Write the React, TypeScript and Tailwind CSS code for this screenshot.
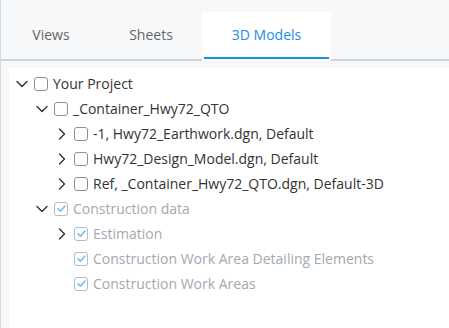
import { ChevronDown, ChevronRight } from "lucide-react";

type Node = {
  label: string;
  level: number;
  expand?: "open" | "closed";
  checked?: boolean;
  disabled?: boolean;
};

const rows: Node[] = [
  { label: "Your Project", level: 0, expand: "open" },
  { label: "_Container_Hwy72_QTO", level: 1, expand: "open" },
  { label: "-1, Hwy72_Earthwork.dgn, Default", level: 2, expand: "closed" },
  { label: "Hwy72_Design_Model.dgn, Default", level: 2, expand: "closed" },
  { label: "Ref, _Container_Hwy72_QTO.dgn, Default-3D", level: 2, expand: "closed" },
  { label: "Construction data", level: 1, expand: "open", checked: true, disabled: true },
  { label: "Estimation", level: 2, expand: "closed", checked: true, disabled: true },
  { label: "Construction Work Area Detailing Elements", level: 2, checked: true, disabled: true },
  { label: "Construction Work Areas", level: 2, checked: true, disabled: true }
];

function Checkbox({ checked, disabled }: { checked?: boolean; disabled?: boolean }) {
  return (
    <span
      className={`flex size-[14px] shrink-0 items-center justify-center rounded-[3px] border bg-white ${
        disabled ? "border-[#b4bac1]" : "border-[#8c8f94]"
      }`}
    >
      {checked ? (
        <svg viewBox="0 0 12 12" className="size-[11px]" fill="none">
          <path d="M2.2 6.4 L4.8 9 L9.8 3.2" stroke="#6bbaf2" strokeWidth="1.6" strokeLinecap="round" strokeLinejoin="round" />
        </svg>
      ) : null}
    </span>
  );
}

function TreeRow({ node }: { node: Node }) {
  return (
    <div className="flex h-[25px] items-center" style={{ paddingLeft: 3 + node.level * 20 }}>
      <span className="flex w-[20px] shrink-0 items-center justify-center text-[#2b2b2b]">
        {node.expand === "open" ? <ChevronDown size={20} strokeWidth={1.5} /> : null}
        {node.expand === "closed" ? <ChevronRight size={20} strokeWidth={1.5} /> : null}
      </span>
      <span className="ml-[2px]">
        <Checkbox checked={node.checked} disabled={node.disabled} />
      </span>
      <span className={`ml-[5px] whitespace-nowrap text-[14px] ${node.disabled ? "text-[#a2a9b1]" : "text-[#333]"}`}>
        {node.label}
      </span>
    </div>
  );
}

export default function App() {
  return (
    <div
      className="flex h-[328px] w-[449px] flex-col overflow-hidden border-l border-[#d6d9de] bg-[#f7f8fa]"
      style={{ fontFamily: '"Open Sans", "Noto Sans", sans-serif' }}
    >
      <div className="flex h-[61px] items-end border-b-2 border-[#cfd3d8] pl-[1px]">
        <div className="flex h-[47px] w-[98px] items-center justify-center pb-[2px] text-[14px] text-[#666]">Views</div>
        <div className="flex h-[47px] w-[102px] items-center justify-center pb-[2px] text-[14px] text-[#666]">Sheets</div>
        <div className="mb-[-2px] flex h-[49px] w-[129px] flex-col bg-white px-[2px]">
          <div className="flex flex-1 items-center justify-center text-[14px] text-[#1b8ee6]">3D Models</div>
          <div className="h-[2px] bg-[#1592e6]" />
          <div className="h-[2px]" />
        </div>
      </div>
      <div className="ml-[8px] mt-[7px] flex-1 bg-white pt-[3px]">
        {rows.map((node) => (
          <TreeRow key={node.label} node={node} />
        ))}
      </div>
    </div>
  );
}
